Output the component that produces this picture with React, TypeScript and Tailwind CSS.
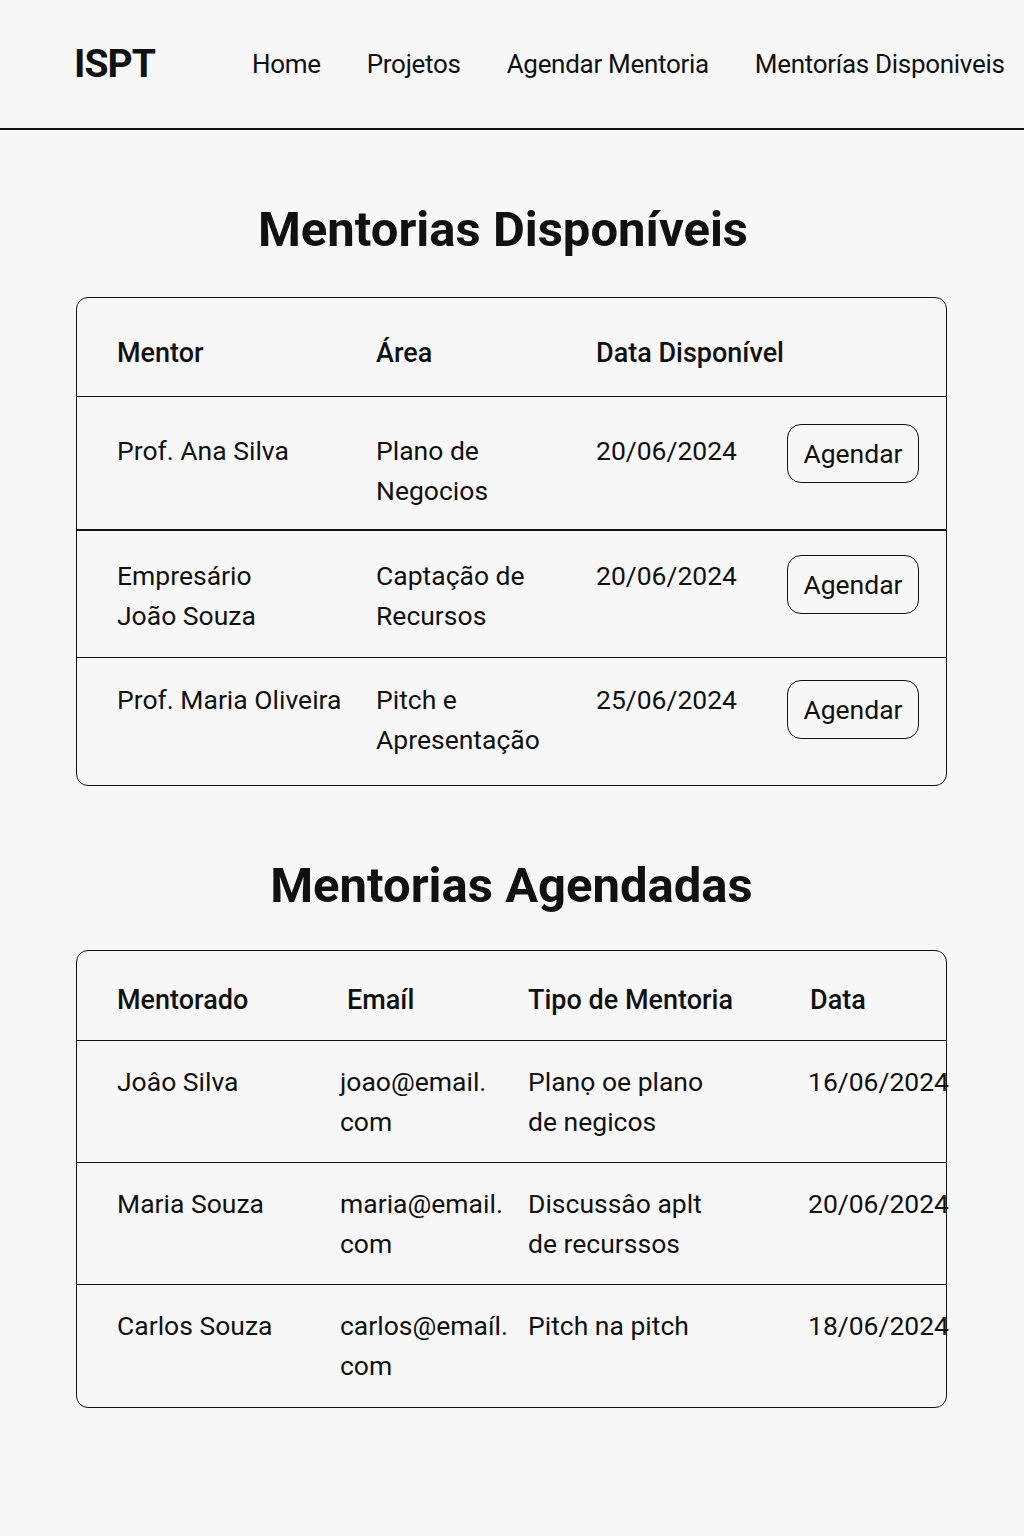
import React from 'react'

const disponiveis = [
  { mentor: 'Prof. Ana Silva', area: 'Plano de\nNegocios', data: '20/06/2024', h: 'h-[134px] pt-[34px]', btn: 'mt-[-7px]', border: 'border-b-2' },
  { mentor: 'Empresário\nJoão Souza', area: 'Captação de\nRecursos', data: '20/06/2024', h: 'h-[127px] pt-[25px]', btn: 'mt-[-1px]', border: 'border-b' },
  { mentor: 'Prof. Maria Oliveira', area: 'Pitch e\nApresentação', data: '25/06/2024', h: 'h-[127px] pt-[22px]', btn: 'mt-0', border: '' },
]

const agendadas = [
  { nome: 'Joâo Silva', email: 'joao@email.\ncom', tipo: 'Planọ oe plano\nde negicos', data: '16/06/2024' },
  { nome: 'Maria Souza', email: 'maria@email.\ncom', tipo: 'Discussâo aplt\nde recurssos', data: '20/06/2024' },
  { nome: 'Carlos Souza', email: 'carlos@emaíl.\ncom', tipo: 'Pitch na pitch', data: '18/06/2024' },
]

export default function App() {
  return (
    <div className="min-h-[1536px] bg-[#f7f7f7] text-[#111] font-['Roboto',sans-serif]">
      <header className="h-[130px] border-b-2 border-[#111] flex items-center">
        <div className="pl-[74px] w-[252px] text-[39px] font-bold tracking-tight">ISPT</div>
        <nav className="flex gap-[46px] text-[26px] tracking-[-0.3px]">
          <span>Home</span>
          <span>Projetos</span>
          <span>Agendar Mentoria</span>
          <span className="whitespace-nowrap">Mentorías Disponiveis</span>
        </nav>
      </header>

      <main className="w-[871px] ml-[76px]">
        <h1 className="mt-[70px] text-center text-[49px] font-bold leading-[60px] ml-[-17px]">Mentorias Disponíveis</h1>

        <div className="mt-[37px] border-[1.5px] border-[#111] rounded-[12px]">
          <div className="grid grid-cols-[299px_220px_191px_1fr] h-[99px] pt-[35px] text-[27px] font-medium leading-[40px] border-b border-[#111]">
            <div className="pl-[40px]">Mentor</div>
            <div>Área</div>
            <div className="whitespace-nowrap">Data Disponível</div>
            <div />
          </div>
          {disponiveis.map((r) => (
            <div key={r.data + r.mentor} className={`grid grid-cols-[299px_220px_191px_1fr] text-[26.5px] leading-[40px] whitespace-pre-line border-[#111] ${r.h} ${r.border}`}>
              <div className="pl-[40px] whitespace-pre">{r.mentor}</div>
              <div>{r.area}</div>
              <div>{r.data}</div>
              <div>
                <button className={`w-[132px] h-[59px] border-[1.5px] border-[#111] rounded-[14px] text-[26.5px] bg-transparent ${r.btn}`}>
                  Agendar
                </button>
              </div>
            </div>
          ))}
        </div>

        <h2 className="mt-[70px] text-center text-[49px] font-bold leading-[60px]">Mentorias Agendadas</h2>

        <div className="mt-[34px] border-[1.5px] border-[#111] rounded-[12px]">
          <div className="grid grid-cols-[263px_188px_280px_1fr] h-[90px] pt-[29px] text-[27px] font-medium leading-[40px] border-b border-[#111]">
            <div className="pl-[40px]">Mentorado</div>
            <div className="pl-[7px]">Emaíl</div>
            <div>Tipo de Mentoria</div>
            <div className="pl-[2px]">Data</div>
          </div>
          {agendadas.map((r, i) => (
            <div key={r.nome} className={`grid grid-cols-[263px_188px_280px_1fr] h-[122px] pt-[21px] text-[26.5px] leading-[40px] whitespace-pre-line border-[#111] ${i < agendadas.length - 1 ? 'border-b' : 'h-[120px]'}`}>
              <div className="pl-[40px]">{r.nome}</div>
              <div className="whitespace-pre">{r.email}</div>
              <div>{r.tipo}</div>
              <div className="whitespace-nowrap">{r.data}</div>
            </div>
          ))}
        </div>
      </main>
    </div>
  )
}
